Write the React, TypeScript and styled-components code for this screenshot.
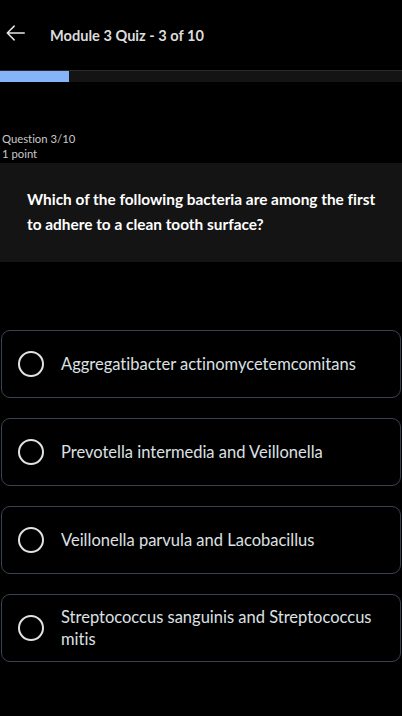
import React, {useState} from "react";
import styled, {createGlobalStyle} from "styled-components";

const GlobalStyle = createGlobalStyle`
  html, body {
    margin: 0;
    padding: 0;
    background: #000;
  }
  body {
    font-family: Lato, "Noto Sans", sans-serif;
    font-variant-ligatures: none;
    color: #e6e6e6;
  }
`;

const options = [
    "Aggregatibacter actinomycetemcomitans",
    "Prevotella intermedia and Veillonella",
    "Veillonella parvula and Lacobacillus",
    "Streptococcus sanguinis and Streptococcus mitis",
];

const App = () => {
    const [selected, setSelected] = useState<number | null>(null);
    const current = 3;
    const total = 10;

    return (
        <>
            <GlobalStyle/>
            <Page>
                <Header>
                    <BackButton aria-label="Back">
                        <svg width="22" height="22" viewBox="0 0 24 24" fill="none" stroke="#e6e6e6"
                             strokeWidth="1.6" strokeLinecap="round" strokeLinejoin="round">
                            <path d="M21 12H3M10 4.5 2.5 12l7.5 7.5"/>
                        </svg>
                    </BackButton>
                    <Title>Module 3 Quiz - {current} of {total}</Title>
                </Header>
                <Track>
                    <Fill style={{width: `${(69 / 402) * 100}%`}}/>
                </Track>

                <Meta>
                    <div>Question {current}/{total}</div>
                    <div>1 point</div>
                </Meta>
                <QuestionBox>
                    Which of the following bacteria are among the first to adhere to a clean tooth surface?
                </QuestionBox>

                <Options>
                    {options.map((text, i) => (
                        <Option key={i} onClick={() => setSelected(i)}>
                            <Radio $checked={selected === i}/>
                            <OptionText>{text}</OptionText>
                        </Option>
                    ))}
                </Options>
            </Page>
        </>
    );
};

const Page = styled.div`
  width: 402px;
  min-height: 716px;
  background: #000;
`;

const Header = styled.div`
  display: flex;
  align-items: center;
  height: 70px;
  padding: 0 0 0 5px;
  box-sizing: border-box;
`;

const BackButton = styled.button`
  display: flex;
  background: none;
  border: 0;
  padding: 0;
  margin-top: -4px;
  width: 45px;
  cursor: pointer;
`;

const Title = styled.h1`
  margin: 0;
  font-size: 14.6px;
  font-weight: 700;
  color: #dcdcdc;
`;

const Track = styled.div`
  height: 12px;
  background: #141414;
  border-top: 1px solid #2a2a2a;
  box-sizing: border-box;
`;

const Fill = styled.div`
  height: 100%;
  background: #86b4fa;
`;

const Meta = styled.div`
  margin-top: 49px;
  padding-left: 2px;
  font-size: 11.3px;
  line-height: 15px;
  color: #c8c8c8;
`;

const QuestionBox = styled.div`
  margin-top: 2px;
  background: #141414;
  padding: 24px 20px 0 27px;
  font-size: 15.4px;
  font-weight: 700;
  line-height: 25px;
  color: #fff;
  height: 99px;
  box-sizing: border-box;
`;

const Options = styled.div`
  display: flex;
  flex-direction: column;
  gap: 20px;
  margin-top: 68px;
  padding: 0 1px;
`;

const Option = styled.div`
  display: flex;
  align-items: center;
  min-height: 68px;
  box-sizing: border-box;
  border: 1px solid #3a4252;
  border-radius: 9px;
  padding: 8px 10px 8px 16px;
  gap: 17px;
  cursor: pointer;
`;

const Radio = styled.span<{ $checked: boolean }>`
  flex: none;
  width: 26px;
  height: 26px;
  box-sizing: border-box;
  border-radius: 50%;
  border: 2px solid #e2e2e2;
  background: ${p => p.$checked ? "radial-gradient(circle, #86b4fa 45%, transparent 50%)" : "none"};
`;

const OptionText = styled.span`
  font-size: 16.5px;
  line-height: 22px;
  color: #dde0e4;
`;

export default App;
